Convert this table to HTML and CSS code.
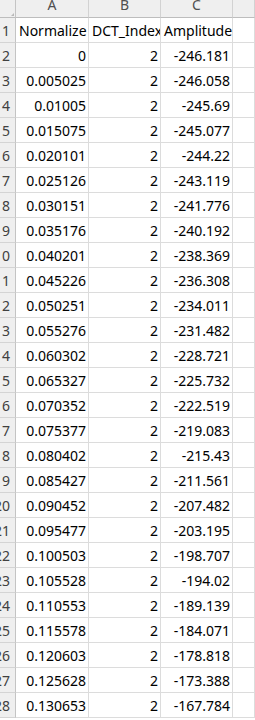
FILE: index.html
```html
<!DOCTYPE html>
<html>
<head>
<meta charset="utf-8">
<link rel="stylesheet" href="styles.css">
</head>
<body>
<div class="sheet">
  <div class="row head">
    <div class="rh corner"></div><div class="ch">A</div><div class="ch">B</div><div class="ch">C</div><div class="ch"></div>
  </div>
  <div class="row"><div class="rh">1</div><div class="c t clip">Normalize</div><div class="c t clip">DCT_Index</div><div class="c t">Amplitude</div><div class="c"></div></div>
  <div class="row"><div class="rh">2</div><div class="c n">0</div><div class="c n">2</div><div class="c n">-246.181</div><div class="c"></div></div>
  <div class="row"><div class="rh">3</div><div class="c n">0.005025</div><div class="c n">2</div><div class="c n">-246.058</div><div class="c"></div></div>
  <div class="row"><div class="rh">4</div><div class="c n">0.01005</div><div class="c n">2</div><div class="c n">-245.69</div><div class="c"></div></div>
  <div class="row"><div class="rh">5</div><div class="c n">0.015075</div><div class="c n">2</div><div class="c n">-245.077</div><div class="c"></div></div>
  <div class="row"><div class="rh">6</div><div class="c n">0.020101</div><div class="c n">2</div><div class="c n">-244.22</div><div class="c"></div></div>
  <div class="row"><div class="rh">7</div><div class="c n">0.025126</div><div class="c n">2</div><div class="c n">-243.119</div><div class="c"></div></div>
  <div class="row"><div class="rh">8</div><div class="c n">0.030151</div><div class="c n">2</div><div class="c n">-241.776</div><div class="c"></div></div>
  <div class="row"><div class="rh">9</div><div class="c n">0.035176</div><div class="c n">2</div><div class="c n">-240.192</div><div class="c"></div></div>
  <div class="row"><div class="rh">10</div><div class="c n">0.040201</div><div class="c n">2</div><div class="c n">-238.369</div><div class="c"></div></div>
  <div class="row"><div class="rh">11</div><div class="c n">0.045226</div><div class="c n">2</div><div class="c n">-236.308</div><div class="c"></div></div>
  <div class="row"><div class="rh">12</div><div class="c n">0.050251</div><div class="c n">2</div><div class="c n">-234.011</div><div class="c"></div></div>
  <div class="row"><div class="rh">13</div><div class="c n">0.055276</div><div class="c n">2</div><div class="c n">-231.482</div><div class="c"></div></div>
  <div class="row"><div class="rh">14</div><div class="c n">0.060302</div><div class="c n">2</div><div class="c n">-228.721</div><div class="c"></div></div>
  <div class="row"><div class="rh">15</div><div class="c n">0.065327</div><div class="c n">2</div><div class="c n">-225.732</div><div class="c"></div></div>
  <div class="row"><div class="rh">16</div><div class="c n">0.070352</div><div class="c n">2</div><div class="c n">-222.519</div><div class="c"></div></div>
  <div class="row"><div class="rh">17</div><div class="c n">0.075377</div><div class="c n">2</div><div class="c n">-219.083</div><div class="c"></div></div>
  <div class="row"><div class="rh">18</div><div class="c n">0.080402</div><div class="c n">2</div><div class="c n">-215.43</div><div class="c"></div></div>
  <div class="row"><div class="rh">19</div><div class="c n">0.085427</div><div class="c n">2</div><div class="c n">-211.561</div><div class="c"></div></div>
  <div class="row"><div class="rh">20</div><div class="c n">0.090452</div><div class="c n">2</div><div class="c n">-207.482</div><div class="c"></div></div>
  <div class="row"><div class="rh">21</div><div class="c n">0.095477</div><div class="c n">2</div><div class="c n">-203.195</div><div class="c"></div></div>
  <div class="row"><div class="rh">22</div><div class="c n">0.100503</div><div class="c n">2</div><div class="c n">-198.707</div><div class="c"></div></div>
  <div class="row"><div class="rh">23</div><div class="c n">0.105528</div><div class="c n">2</div><div class="c n">-194.02</div><div class="c"></div></div>
  <div class="row"><div class="rh">24</div><div class="c n">0.110553</div><div class="c n">2</div><div class="c n">-189.139</div><div class="c"></div></div>
  <div class="row"><div class="rh">25</div><div class="c n">0.115578</div><div class="c n">2</div><div class="c n">-184.071</div><div class="c"></div></div>
  <div class="row"><div class="rh">26</div><div class="c n">0.120603</div><div class="c n">2</div><div class="c n">-178.818</div><div class="c"></div></div>
  <div class="row"><div class="rh">27</div><div class="c n">0.125628</div><div class="c n">2</div><div class="c n">-173.388</div><div class="c"></div></div>
  <div class="row"><div class="rh">28</div><div class="c n">0.130653</div><div class="c n">2</div><div class="c n">-167.784</div><div class="c"></div></div>
</div>
</body>
</html>
```

FILE: styles.css
```css
* { box-sizing: border-box; }
html, body {
  margin: 0;
  padding: 0;
  background: #ffffff;
  overflow: hidden;
}
body {
  width: 255px;
  height: 720px;
  font-family: "Noto Sans", "Noto Sans CJK JP", sans-serif;
  font-size: 14px;
  color: #000;
}
.sheet {
  display: flex;
  flex-direction: column;
}
.row {
  display: grid;
  grid-template-columns: 16px 73px 72px 72px 1fr;
  height: 25px;
}
.row.head {
  height: 18px;
}
.rh {
  background: #efefef;
  border-right: 1px solid #c4c4c4;
  border-bottom: 1px solid #d4d4d4;
  color: #404040;
  display: flex;
  justify-content: flex-end;
  align-items: flex-end;
  overflow: hidden;
  white-space: nowrap;
  padding-right: 5px;
  padding-bottom: 1px;
  line-height: 20px;
}
.head .rh {
  border-bottom: 1px solid #bdbdbd;
}
.corner {
  position: relative;
}
.corner::after {
  content: "";
  position: absolute;
  right: 1px;
  bottom: 1px;
  width: 0;
  height: 0;
  border-left: 3px solid transparent;
  border-bottom: 3px solid #b8b8b8;
}
.ch {
  background: #efefef;
  border-right: 1px solid #d2d2d2;
  border-bottom: 1px solid #bdbdbd;
  color: #505050;
  text-align: center;
  line-height: 9px;
  overflow: hidden;
}
.c {
  border-right: 1px solid #dcdcdc;
  border-bottom: 1px solid #dcdcdc;
  display: flex;
  align-items: flex-end;
  white-space: nowrap;
  line-height: 20px;
  padding-bottom: 1px;
}
.c.n {
  justify-content: flex-end;
  padding-right: 2px;
}
.c.t {
  padding-left: 3px;
}
.c.clip {
  overflow: hidden;
}
```
